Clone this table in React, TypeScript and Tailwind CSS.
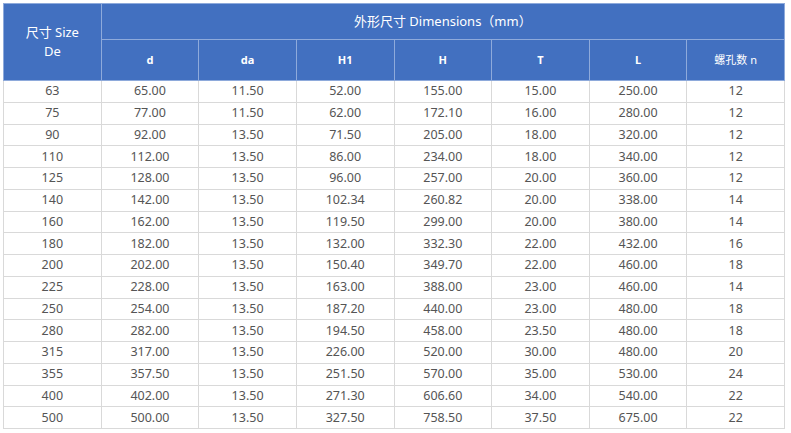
const rows: string[][] = [
  ["63", "65.00", "11.50", "52.00", "155.00", "15.00", "250.00", "12"],
  ["75", "77.00", "11.50", "62.00", "172.10", "16.00", "280.00", "12"],
  ["90", "92.00", "13.50", "71.50", "205.00", "18.00", "320.00", "12"],
  ["110", "112.00", "13.50", "86.00", "234.00", "18.00", "340.00", "12"],
  ["125", "128.00", "13.50", "96.00", "257.00", "20.00", "360.00", "12"],
  ["140", "142.00", "13.50", "102.34", "260.82", "20.00", "338.00", "14"],
  ["160", "162.00", "13.50", "119.50", "299.00", "20.00", "380.00", "14"],
  ["180", "182.00", "13.50", "132.00", "332.30", "22.00", "432.00", "16"],
  ["200", "202.00", "13.50", "150.40", "349.70", "22.00", "460.00", "18"],
  ["225", "228.00", "13.50", "163.00", "388.00", "23.00", "460.00", "14"],
  ["250", "254.00", "13.50", "187.20", "440.00", "23.00", "480.00", "18"],
  ["280", "282.00", "13.50", "194.50", "458.00", "23.50", "480.00", "18"],
  ["315", "317.00", "13.50", "226.00", "520.00", "30.00", "480.00", "20"],
  ["355", "357.50", "13.50", "251.50", "570.00", "35.00", "530.00", "24"],
  ["400", "402.00", "13.50", "271.30", "606.60", "34.00", "540.00", "22"],
  ["500", "500.00", "13.50", "327.50", "758.50", "37.50", "675.00", "22"]
];

const subHeads = ["d", "da", "H1", "H", "T", "L"];

export default function App() {
  return (
    <div className="w-[791px] h-[433px] bg-white pl-[3px] pt-[3px] font-['Noto_Sans','Noto_Sans_CJK_SC',sans-serif]">
      <table className="w-[782px] table-fixed border-collapse border border-[#b5b5b5] text-center">
        <thead className="bg-[#4270c0] text-white">
          <tr className="h-[36px]">
            <th
              rowSpan={2}
              className="border border-[#8eaadb] text-[13px] font-normal leading-[19px]"
            >
              尺寸 Size
              <br />
              De
            </th>
            <th
              colSpan={7}
              className="border border-[#8eaadb] text-[13px] font-normal"
            >
              外形尺寸 Dimensions（mm）
            </th>
          </tr>
          <tr className="h-[41px]">
            {subHeads.map((h) => (
              <th
                key={h}
                className="border border-[#8eaadb] text-[11px] font-bold"
              >
                {h}
              </th>
            ))}
            <th className="border border-[#8eaadb] text-[11px] font-normal">
              螺孔数 n
            </th>
          </tr>
        </thead>
        <tbody className="text-[12.5px] text-[#555]">
          {rows.map((r) => (
            <tr key={r[0]} className="h-[21.75px]">
              {r.map((c, i) => (
                <td key={i} className="border border-[#d9d9d9] p-0 leading-[16px]">
                  {c}
                </td>
              ))}
            </tr>
          ))}
        </tbody>
      </table>
    </div>
  );
}
